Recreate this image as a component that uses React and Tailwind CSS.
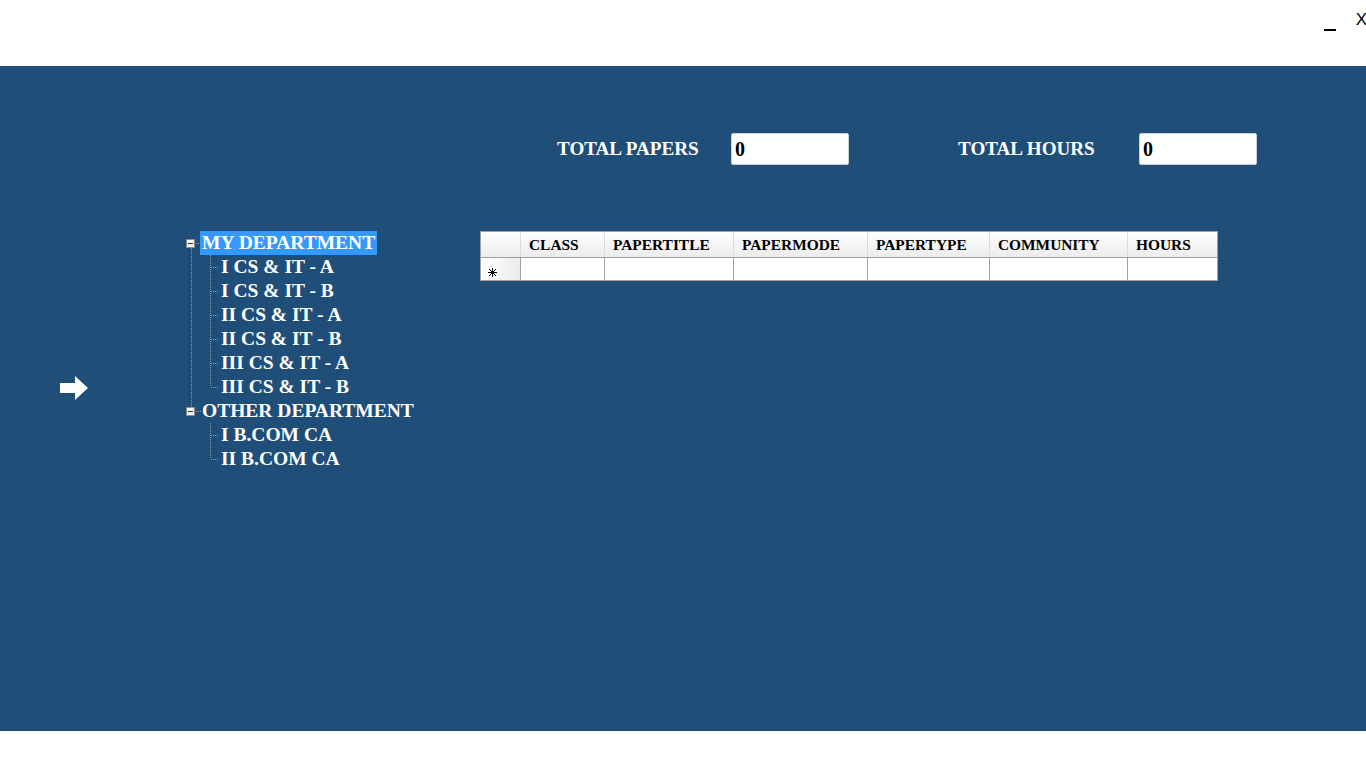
import React from "react";

const serif = { fontFamily: '"Liberation Serif", "Times New Roman", serif' };

const columns = [
  { name: "CLASS", w: "w-[84px]" },
  { name: "PAPERTITLE", w: "w-[129px]" },
  { name: "PAPERMODE", w: "w-[134px]" },
  { name: "PAPERTYPE", w: "w-[122px]" },
  { name: "COMMUNITY", w: "w-[138px]" },
  { name: "HOURS", w: "w-[89px]" },
];

const myDept = ["I CS & IT - A", "I CS & IT - B", "II CS & IT - A", "II CS & IT - B", "III CS & IT - A", "III CS & IT - B"];
const otherDept = ["I B.COM CA", "II B.COM CA"];

const Box = () => (
  <span className="w-[9px] h-[9px] border border-[#8c8c8c] bg-[#f4f4f4] flex items-center justify-center">
    <span className="w-[5px] h-px bg-[#333]" />
  </span>
);

const TreeLines = () => (
  <svg className="absolute left-0 top-0 pointer-events-none" width="40" height="240">
    <g stroke="#8a9bb0" strokeWidth="1" strokeDasharray="1 1" shapeRendering="crispEdges">
      {/* root vertical */}
      <line x1="5.5" y1="17" x2="5.5" y2="176" />
      {/* box to label */}
      <line x1="10" y1="12.5" x2="15" y2="12.5" />
      <line x1="10" y1="180.5" x2="15" y2="180.5" />
      {/* children of my department */}
      <line x1="24.5" y1="24" x2="24.5" y2="156" />
      {myDept.map((_, i) => (
        <line key={i} x1="25" y1={36.5 + i * 24} x2="33" y2={36.5 + i * 24} />
      ))}
      {/* children of other department */}
      <line x1="24.5" y1="192" x2="24.5" y2="228" />
      {otherDept.map((_, i) => (
        <line key={i} x1="25" y1={204.5 + i * 24} x2="33" y2={204.5 + i * 24} />
      ))}
    </g>
  </svg>
);

export default function App() {
  return (
    <div className="w-[1366px] h-[768px] bg-white overflow-hidden" style={serif}>
      {/* title strip */}
      <div className="h-[66px] bg-white flex justify-end items-start">
        <span className="mt-[29px] mr-[20px] w-[12px] h-[2px] bg-black" />
        <span className="mt-[11px] mr-[-1px] text-[17px] leading-none text-black" style={{ fontFamily: '"Liberation Sans", Arial, sans-serif' }}>
          X
        </span>
      </div>

      <div className="h-[665px] bg-[#1f4e79]">
        {/* totals */}
        <div className="flex items-center pt-[67px] pl-[557px]">
          <span className="w-[174px] text-white font-bold text-[19.1px] leading-none">TOTAL PAPERS</span>
          <div className="w-[118px] h-[32px] bg-white border border-[#c8d0d8] rounded-[2px] flex items-center pl-[3px] text-black font-bold text-[20px]">
            0
          </div>
          <span className="ml-[109px] w-[181px] text-white font-bold text-[19.1px] leading-none">TOTAL HOURS</span>
          <div className="w-[118px] h-[32px] bg-white border border-[#c8d0d8] rounded-[2px] flex items-center pl-[3px] text-black font-bold text-[20px]">
            0
          </div>
        </div>

        <div className="flex mt-[66px]">
          {/* arrow */}
          <div className="w-[186px] pl-[60px] pt-[145px]">
            <svg width="28" height="24" viewBox="0 0 28 24">
              <path d="M0 7 H15 V0 L28 12 L15 24 V17 H0 Z" fill="#ffffff" />
            </svg>
          </div>

          {/* tree */}
          <div className="w-[294px] relative text-white font-bold text-[19.5px]">
            <TreeLines />
            <div className="h-[24px] flex items-center">
              <Box />
              <span className="ml-[5px] bg-[#3399ff] h-[24px] leading-[24px] pl-[2px] pr-[2px]">MY DEPARTMENT</span>
            </div>
            {myDept.map((t) => (
              <div key={t} className="h-[24px] leading-[24px] pl-[35px] whitespace-pre">
                {t}
              </div>
            ))}
            <div className="h-[24px] flex items-center">
              <Box />
              <span className="ml-[7px] leading-[24px]">OTHER DEPARTMENT</span>
            </div>
            {otherDept.map((t) => (
              <div key={t} className="h-[24px] leading-[24px] pl-[35px]">
                {t}
              </div>
            ))}
          </div>

          {/* grid */}
          <div className="border border-[#a0a0a0] bg-[#a0a0a0] self-start">
            <div className="flex h-[25px]">
              <div className="w-[40px] bg-gradient-to-b from-white to-[#ececec] border-r border-[#dcdcdc]" />
              {columns.map((c) => (
                <div
                  key={c.name}
                  className={`${c.w} bg-gradient-to-b from-white to-[#ececec] border-r border-[#dcdcdc] last:border-r-0 pl-[8px] flex items-center text-[15.4px] font-bold text-black`}
                >
                  {c.name}
                </div>
              ))}
            </div>
            <div className="flex h-[23px] border-t border-[#a0a0a0]">
              <div className="w-[40px] bg-gradient-to-r from-white to-[#ececec] border-r border-[#a0a0a0] flex items-end pl-[7px] pb-[3px]">
                <svg width="9" height="9" viewBox="0 0 9 9">
                  <g stroke="#000" strokeWidth="1" shapeRendering="crispEdges">
                    <line x1="4.5" y1="0" x2="4.5" y2="9" />
                    <line x1="0" y1="4.5" x2="9" y2="4.5" />
                    <line x1="1" y1="1" x2="8" y2="8" />
                    <line x1="8" y1="1" x2="1" y2="8" />
                  </g>
                </svg>
              </div>
              {columns.map((c) => (
                <div key={c.name} className={`${c.w} bg-white border-r border-[#a0a0a0] last:border-r-0`} />
              ))}
            </div>
          </div>
        </div>
      </div>
    </div>
  );
}
